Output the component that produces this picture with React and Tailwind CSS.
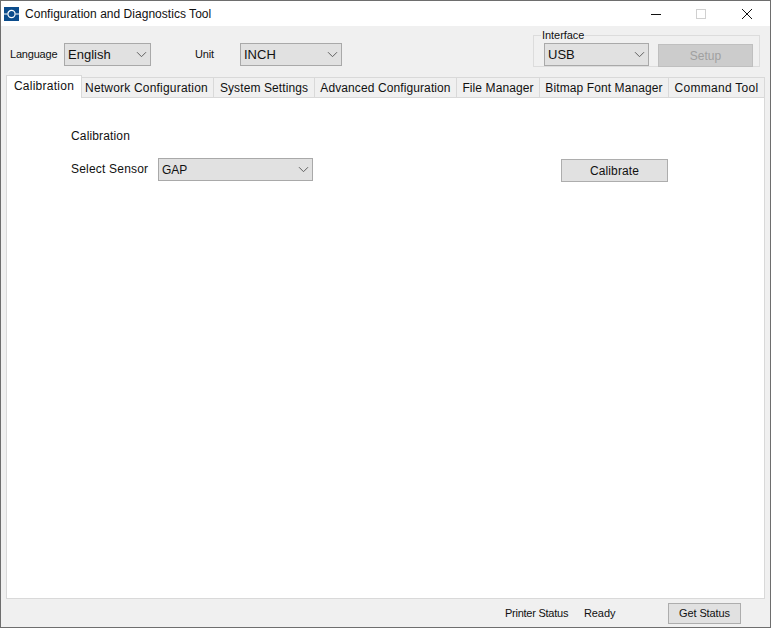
const F = { fontFamily: '"Liberation Sans", Arial, sans-serif' };

function Chevron({ color = "#606060" }) {
  return (
    <svg width="11" height="7" viewBox="0 0 11 7" fill="none" className="shrink-0">
      <path d="M1 1.2 L5.5 5.7 L10 1.2" stroke={color} strokeWidth="1" />
    </svg>
  );
}

function Combo({ label, className, textClass = "text-[13px]" }) {
  return (
    <div className={`flex items-center justify-between border border-[#a9a9a9] bg-[#e1e1e1] pl-[3px] pr-[3px] text-[#111] ${className}`}>
      <span className={`${textClass}`}>{label}</span>
      <Chevron />
    </div>
  );
}

const tabs = [
  ["Network Configuration", "w-[132px]", "tracking-[0.2px] pr-[2px]"],
  ["System Settings", "w-[101px]", "tracking-[0.1px]"],
  ["Advanced Configuration", "w-[142px]", "tracking-[0.1px]"],
  ["File Manager", "w-[83px]", "tracking-[0.1px]"],
  ["Bitmap Font Manager", "w-[129px]", "tracking-[0.1px]"],
  ["Command Tool", "w-[96px]", "tracking-[0.3px]"],
];

export default function App() {
  return (
    <div style={F} className="w-[771px] h-[628px] flex flex-col border border-[#6e6e6e] bg-[#f0f0f0] text-[12px] text-[#111] overflow-hidden">
      <div className="h-[25px] shrink-0 bg-white flex items-center pl-[3px]">
        <svg width="15" height="14" viewBox="0 0 15 14" className="shrink-0">
          <rect width="15" height="14" fill="#0b4c8c" />
          <path d="M0 7 H3.5 M11.5 7 H15" stroke="#fff" strokeWidth="1" />
          <circle cx="7.5" cy="7" r="3.6" fill="none" stroke="#fff" strokeWidth="1.2" />
        </svg>
        <span className="ml-[6px] text-[12px] tracking-[0.03px]">Configuration and Diagnostics Tool</span>
        <div className="ml-auto flex items-center">
          <svg width="12" height="12" viewBox="0 0 12 12" className="mr-[33px]"><path d="M1 6.5 H11" stroke="#111" strokeWidth="1" /></svg>
          <svg width="12" height="12" viewBox="0 0 12 12" className="mr-[34px]"><rect x="1.5" y="1.5" width="9" height="9" fill="none" stroke="#d0d0d0" /></svg>
          <svg width="12" height="12" viewBox="0 0 12 12" className="mr-[17px]"><path d="M1 1 L11 11 M11 1 L1 11" stroke="#111" strokeWidth="1" /></svg>
        </div>
      </div>

      <div className="h-[49px] shrink-0 flex items-start">
        <span className="mt-[21px] ml-[9px] w-[54px] text-[11px] leading-[15px] tracking-[-0.2px]">Language</span>
        <Combo label="English" className="mt-[17px] w-[87px] h-[23px]" />
        <span className="mt-[21px] ml-[44px] w-[45px] text-[11px] leading-[15px] tracking-[-0.2px]">Unit</span>
        <Combo label="INCH" className="mt-[17px] w-[102px] h-[23px]" />
        <fieldset className="ml-[191px] mt-[3px] w-[227px] h-[38px] border border-[#dcdcdc] pl-[10px] box-border">
          <legend className="ml-[-3px] px-[1px] text-[11px] leading-[13px] tracking-[-0.05px]">Interface</legend>
          <div className="flex items-start mt-[1px]">
            <Combo label="USB" className="w-[105px] h-[23px]" textClass="text-[13px]" />
            <div className="ml-[9px] mt-[1px] w-[95px] h-[23px] bg-[#cccccc] border border-[#bfbfbf] flex items-center justify-center text-[12px] text-[#a0a0a0]">Setup</div>
          </div>
        </fieldset>
      </div>

      <div className="h-[22px] shrink-0 flex items-end pl-[5px] relative z-10">
        <div className="w-[76px] h-[23px] bg-white border border-b-0 border-[#d9d9d9] flex items-start justify-center pt-[2px] leading-[16px] tracking-[0.25px] mb-[-1px]">Calibration</div>
        {tabs.map(([t, w, s]) => (
          <div key={t} className={`${w} ${s} h-[20px] bg-[#f0f0f0] border-t border-r border-[#d9d9d9] flex items-center justify-center whitespace-nowrap`}>{t}</div>
        ))}
      </div>

      <div className="flex-1 mx-[5px] bg-white border border-[#d9d9d9] flex items-start">
        <div className="ml-[64px] mt-[30px] w-[242px]">
          <div className="leading-[16px] tracking-[0.15px]">Calibration</div>
          <div className="flex items-center mt-[14px]">
            <span className="w-[87px] tracking-[0.2px] pb-[2px]">Select Sensor</span>
            <Combo label="GAP" className="w-[155px] h-[23px]" textClass="text-[12px]" />
          </div>
        </div>
        <div className="ml-[248px] mt-[61px] w-[107px] h-[23px] bg-[#e1e1e1] border border-[#adadad] flex items-center justify-center tracking-[0.1px]">Calibrate</div>
      </div>

      <div className="h-[28px] shrink-0 flex items-center">
        <span className="ml-[504px] w-[79px] text-[11px] tracking-[-0.25px]">Printer Status</span>
        <span className="w-[84px] text-[11px] tracking-[-0.1px]">Ready</span>
        <div className="w-[73px] h-[21px] mt-[1px] bg-[#e1e1e1] border border-[#adadad] flex items-center justify-center text-[11px] tracking-[-0.1px]">Get Status</div>
      </div>
    </div>
  );
}
